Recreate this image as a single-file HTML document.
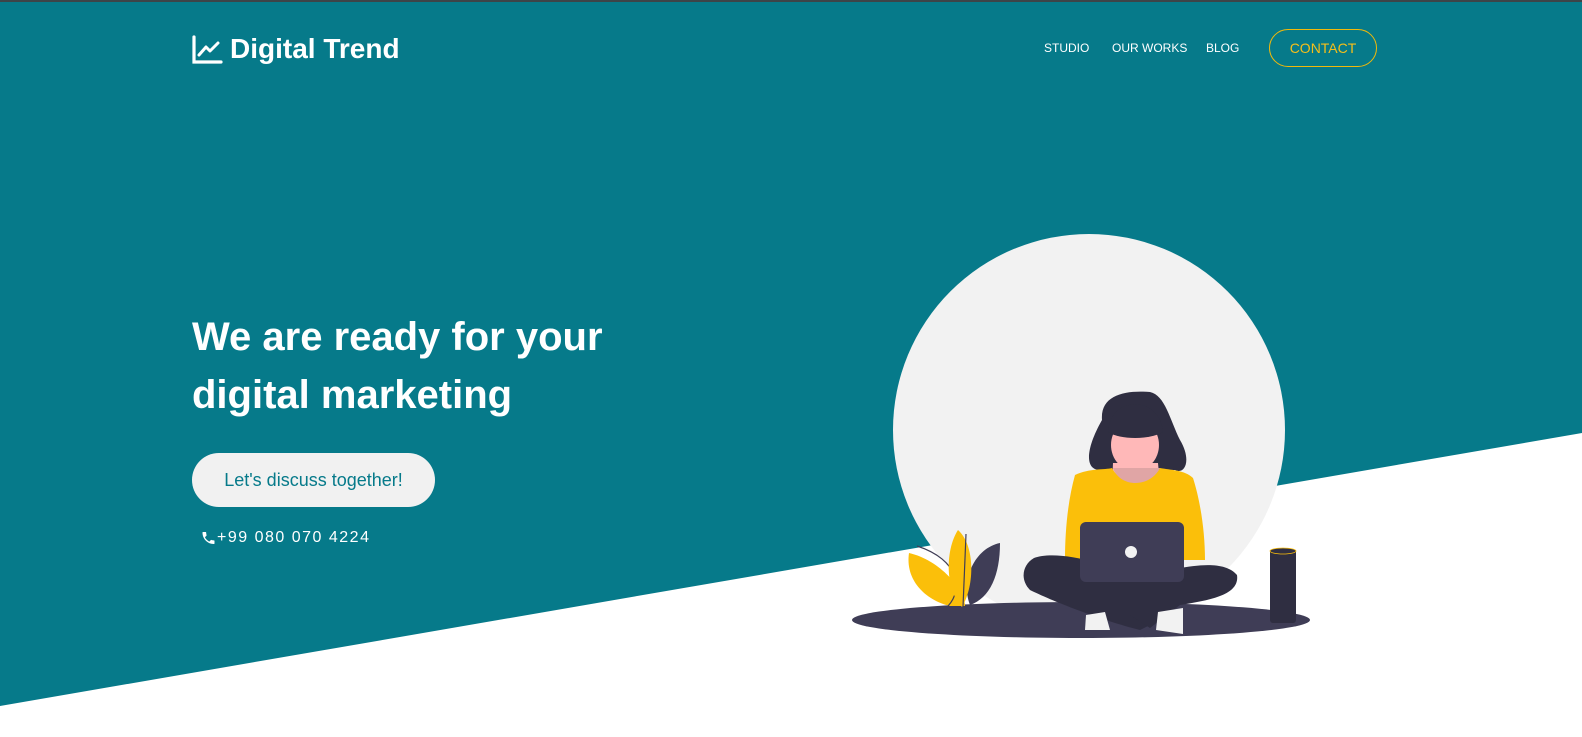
<!DOCTYPE html>
<html><head><meta charset="utf-8"><style>
*{margin:0;padding:0;box-sizing:border-box}
body{width:1582px;height:737px;overflow:hidden;background:#fff;font-family:"Liberation Sans",Arial,sans-serif;position:relative}
.bg{position:absolute;left:0;top:0;width:1582px;height:737px}
.logo{position:absolute;left:192px;top:33px;color:#fff;font-size:28px;font-weight:bold;display:flex;align-items:center;gap:7px}
.nav{position:absolute;top:41px;color:#fff;font-size:12px}
.contact{position:absolute;left:1269px;top:29px;width:108px;height:38px;border:1px solid #f0b90b;border-radius:19px;color:#f5bf1a;font-size:14px;text-align:center;line-height:36px}
h1{position:absolute;left:192px;top:308px;color:#fff;font-size:40px;font-weight:bold;line-height:58px;width:520px}
.btn{position:absolute;left:192px;top:453px;width:243px;height:54px;background:#f1f1f1;border-radius:27px;color:#067a8a;font-size:18px;text-align:center;line-height:54px}
.phone{position:absolute;left:200px;top:529px;color:#fff;font-size:16px;letter-spacing:1.5px;display:flex;align-items:center}
</style></head><body>
<svg class="bg" viewBox="0 0 1582 737"><rect width="1582" height="737" fill="#fff"/><polygon points="0,0 1582,0 1582,433 0,706" fill="#067a8a"/><rect width="1582" height="2" fill="#3d4448"/>
<circle cx="1089" cy="430" r="196" fill="#f2f2f2"/>
<ellipse cx="1081" cy="620" rx="229" ry="18" fill="#3f3d56"/>
<path d="M909 553 C940 560 965 590 965 606 L950 606 C925 600 905 580 909 553Z" fill="#fbbf0a"/>
<path d="M917 546 C960 560 963 590 948 606" fill="none" stroke="#3f3d56" stroke-width="1.2"/>
<path d="M1000 543 C975 548 960 580 970 605 C990 598 1000 575 1000 543Z" fill="#3f3d56"/>
<path d="M958 530 C975 545 975 585 962 607 C945 590 945 550 958 530Z" fill="#fbbf0a"/>
<path d="M966 534 L963 607" stroke="#3f3d56" stroke-width="1.2"/>
<path d="M1102 420 C1100 395 1125 390 1150 392 C1165 395 1170 420 1180 440 C1192 460 1185 475 1175 470 L1100 470 C1085 470 1085 450 1102 420Z" fill="#2f2e41"/>
<ellipse cx="1135" cy="445" rx="24" ry="26" fill="#ffb8b8"/>
<path d="M1108 432 C1110 395 1160 395 1163 432 C1150 440 1120 440 1108 432Z" fill="#2f2e41"/>
<path d="M1113 463 L1158 463 L1160 485 L1112 485Z" fill="#ffb8b8"/>
<path d="M1075 475 C1090 468 1105 470 1112 468 C1120 485 1150 485 1160 468 C1170 470 1185 470 1193 478 C1200 500 1205 530 1205 560 L1065 560 C1065 530 1068 500 1075 475Z" fill="#fbbf0a"/>
<path d="M1113 468 C1120 488 1150 488 1160 468 Z" fill="#e0a5a5"/>
<path d="M1034 558 C1055 550 1110 560 1150 590 L1160 620 L1140 630 C1100 620 1050 600 1030 590 C1020 580 1022 565 1034 558Z" fill="#2f2e41"/>
<path d="M1130 580 C1170 570 1220 555 1237 575 C1240 595 1210 600 1180 605 L1150 628 L1130 615Z" fill="#2f2e41"/>
<path d="M1086 615 L1105 612 L1110 630 L1085 630Z" fill="#f2f2f2"/>
<path d="M1158 612 L1183 608 L1183 634 L1156 630Z" fill="#f2f2f2"/>
<rect x="1080" y="522" width="104" height="60" rx="6" fill="#3f3d56"/>
<circle cx="1131" cy="552" r="6" fill="#f2f2f2"/>
<rect x="1270" y="549" width="26" height="74" rx="3" fill="#2f2e41"/>
<ellipse cx="1283" cy="551" rx="13" ry="3" fill="#2f2e41" stroke="#fbbf0a" stroke-width="0.8"/>
</svg>
<div class="logo"><svg width="31" height="30" viewBox="0 0 31 30"><path d="M2 3 V28 H29" fill="none" stroke="#fff" stroke-width="3.2" stroke-linecap="round"/><path d="M7 21 L14 13 L18 17 L26 9" fill="none" stroke="#fff" stroke-width="3" stroke-linecap="round" stroke-linejoin="round"/></svg>Digital Trend</div>
<div class="nav" style="left:1044px">STUDIO</div>
<div class="nav" style="left:1112px">OUR WORKS</div>
<div class="nav" style="left:1206px">BLOG</div>
<div class="contact">CONTACT</div>
<h1>We are ready for your digital marketing</h1>
<div class="btn">Let's discuss together!</div>
<div class="phone"><svg width="17" height="16" viewBox="0 0 24 24"><path fill="#fff" d="M6.6 10.8c1.4 2.8 3.8 5.1 6.6 6.6l2.2-2.2c.3-.3.7-.4 1-.2 1.1.4 2.3.6 3.6.6.6 0 1 .4 1 1V20c0 .6-.4 1-1 1C10.6 21 3 13.4 3 4c0-.6.4-1 1-1h3.5c.6 0 1 .4 1 1 0 1.2.2 2.4.6 3.6.1.3 0 .7-.2 1z"/></svg>+99 080 070 4224</div>
</body></html>
